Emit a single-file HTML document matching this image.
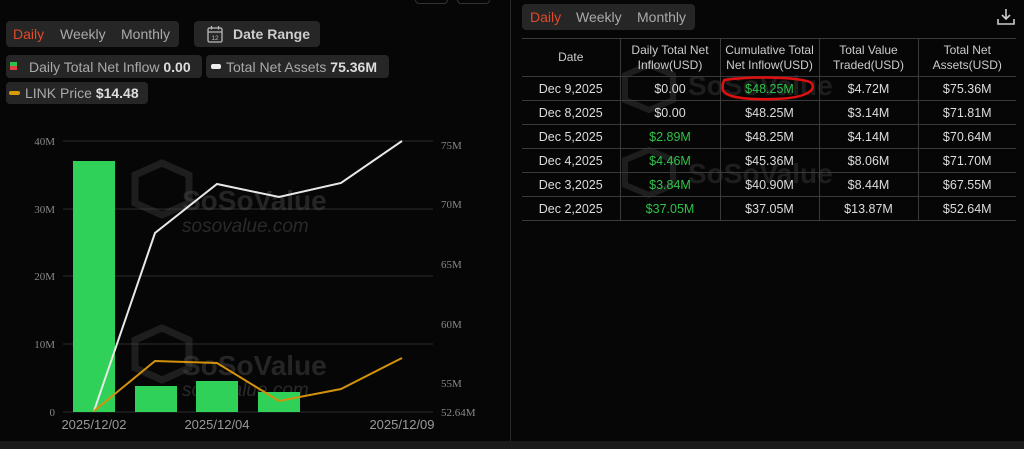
<!DOCTYPE html>
<html><head><meta charset="utf-8"><style>
*{margin:0;padding:0;box-sizing:border-box}
body{width:1024px;height:449px;background:#060606;font-family:"Liberation Sans",sans-serif;position:relative;overflow:hidden;color:#ccc}
.abs{position:absolute}
.box{position:absolute;background:#262626;border-radius:4px}
.t{position:absolute;font-size:14px;white-space:nowrap}
table{position:absolute;left:522px;top:38px;width:494px;border-collapse:collapse;font-size:12.5px;color:#ddd;table-layout:fixed}
td,th{border:1px solid #3a3a3a;text-align:center;font-weight:normal;height:24px}
th{height:38px;line-height:15px;color:#ccc;font-size:12px}
tr td:first-child,tr th:first-child{border-left:none}
tr td:last-child,tr th:last-child{border-right:none}
.g{color:#2fc24a}
</style></head><body>
<div class="abs" style="left:510px;top:0;width:1px;height:441px;background:#2a2a2a"></div>
<div class="abs" style="left:0;top:441px;width:1024px;height:8px;background:#1b1b1b"></div>
<div class="abs" style="left:415px;top:-6px;width:33px;height:10px;border:1px solid #333;border-radius:4px"></div>
<div class="abs" style="left:457px;top:-6px;width:33px;height:10px;border:1px solid #333;border-radius:4px"></div>

<div class="box" style="left:6px;top:21px;width:173px;height:26px"></div>
<div class="t" style="left:13px;top:26px;color:#e04a2a">Daily</div>
<div class="t" style="left:60px;top:26px;color:#aaa">Weekly</div>
<div class="t" style="left:121px;top:26px;color:#aaa">Monthly</div>
<div class="box" style="left:194px;top:21px;width:126px;height:26px"></div>
<svg class="abs" style="left:207px;top:25px" width="16" height="18" viewBox="0 0 16 18"><rect x="1" y="3" width="14" height="14" rx="1.5" fill="none" stroke="#bbb" stroke-width="1.3"/><line x1="1" y1="7" x2="15" y2="7" stroke="#bbb" stroke-width="1.2"/><line x1="4.5" y1="1" x2="4.5" y2="4.5" stroke="#bbb" stroke-width="1.3"/><line x1="11.5" y1="1" x2="11.5" y2="4.5" stroke="#bbb" stroke-width="1.3"/><text x="8" y="15" font-size="6.5" fill="#bbb" text-anchor="middle" font-family="Liberation Sans">12</text></svg>
<div class="t" style="left:233px;top:26px;color:#ccc;font-weight:bold">Date Range</div>

<div class="box" style="left:6px;top:55px;width:196px;height:23px"></div>
<div class="abs" style="left:10px;top:62px;width:7px;height:4px;background:#2fc24a"></div>
<div class="abs" style="left:10px;top:66px;width:7px;height:4px;background:#e04040"></div>
<div class="t" style="left:29px;top:59px;color:#aaa">Daily Total Net Inflow <b style="color:#ddd">0.00</b></div>
<div class="box" style="left:206px;top:55px;width:183px;height:23px"></div>
<div class="abs" style="left:211px;top:64px;width:10px;height:5px;background:#eee;border-radius:2px"></div>
<div class="t" style="left:226px;top:59px;color:#aaa">Total Net Assets <b style="color:#ddd">75.36M</b></div>
<div class="box" style="left:6px;top:82px;width:142px;height:22px"></div>
<div class="abs" style="left:9px;top:91px;width:11px;height:4px;background:#d99a0a;border-radius:2px"></div>
<div class="t" style="left:25px;top:85px;color:#aaa">LINK Price <b style="color:#ddd">$14.48</b></div>

<svg class="abs" style="left:0;top:120px" width="510" height="320" viewBox="0 120 510 320" font-family="Liberation Serif" font-size="11" fill="#888">
<g stroke="#2c2c2c" stroke-width="1">
<line x1="63" y1="141" x2="433" y2="141"/><line x1="63" y1="209" x2="433" y2="209"/><line x1="63" y1="276" x2="433" y2="276"/><line x1="63" y1="344" x2="433" y2="344"/><line x1="63" y1="412" x2="433" y2="412"/></g>
<text x="55" y="145" text-anchor="end">40M</text><text x="55" y="213" text-anchor="end">30M</text><text x="55" y="280" text-anchor="end">20M</text><text x="55" y="348" text-anchor="end">10M</text><text x="55" y="416" text-anchor="end">0</text>
<text x="441" y="149">75M</text><text x="441" y="208">70M</text><text x="441" y="268">65M</text><text x="441" y="328">60M</text><text x="441" y="387">55M</text><text x="441" y="416">52.64M</text>
<g fill="#555" font-family="Liberation Sans" font-size="28" font-weight="bold" opacity="0.4"><text x="182" y="210">SoSoValue</text><text x="182" y="375">SoSoValue</text></g>
<g fill="#555" font-family="Liberation Sans" font-size="19" font-style="italic" opacity="0.45"><text x="182" y="232">sosovalue.com</text><text x="182" y="396">sosovalue.com</text></g>
<g fill="none" stroke="#444" stroke-width="7" opacity="0.4"><path d="M135 175l27 -12l27 12v28l-27 12l-27 -12z"/><path d="M135 340l27 -12l27 12v28l-27 12l-27 -12z"/></g>
<g fill="#30d158"><rect x="73" y="161" width="42" height="251"/><rect x="135" y="386" width="42" height="26"/><rect x="196" y="381" width="42" height="31"/><rect x="258" y="392" width="42" height="20"/></g>
<polyline points="94,411 155,233 217,184 279,197 341,183 402,141" fill="none" stroke="#e8e8e8" stroke-width="2"/>
<polyline points="94,411 155,361 217,363 279,401 341,389 402,358" fill="none" stroke="#d4920c" stroke-width="2"/>
<g font-size="13" fill="#999" font-family="Liberation Sans"><text x="94" y="429" text-anchor="middle">2025/12/02</text><text x="217" y="429" text-anchor="middle">2025/12/04</text><text x="402" y="429" text-anchor="middle">2025/12/09</text></g>
</svg>

<div class="box" style="left:522px;top:4px;width:173px;height:26px"></div>
<div class="t" style="left:530px;top:9px;color:#e04a2a">Daily</div>
<div class="t" style="left:576px;top:9px;color:#aaa">Weekly</div>
<div class="t" style="left:637px;top:9px;color:#aaa">Monthly</div>
<svg class="abs" style="left:996px;top:8px" width="20" height="18" viewBox="0 0 20 18"><path d="M10 1v10M6 7l4 4l4-4M2 11v5h16v-5" fill="none" stroke="#ccc" stroke-width="1.6"/></svg>

<svg class="abs" style="left:620px;top:55px" width="320" height="150" font-family="Liberation Sans">
<g fill="#444" font-size="28" font-weight="bold" opacity="0.4"><text x="68" y="40">SoSoValue</text><text x="68" y="128">SoSoValue</text></g>
<g fill="none" stroke="#444" stroke-width="6" opacity="0.4"><path d="M5 20l24 -10l24 10v25l-24 10l-24 -10z"/><path d="M5 105l24 -10l24 10v25l-24 10l-24 -10z"/></g>
</svg>

<table>
<colgroup><col style="width:98px"><col style="width:100px"><col style="width:99px"><col style="width:99px"><col style="width:98px"></colgroup>
<tr><th>Date</th><th>Daily Total Net<br>Inflow(USD)</th><th>Cumulative Total<br>Net Inflow(USD)</th><th>Total Value<br>Traded(USD)</th><th>Total Net<br>Assets(USD)</th></tr>
<tr><td>Dec 9,2025</td><td>$0.00</td><td class="g">$48.25M</td><td>$4.72M</td><td>$75.36M</td></tr>
<tr><td>Dec 8,2025</td><td>$0.00</td><td>$48.25M</td><td>$3.14M</td><td>$71.81M</td></tr>
<tr><td>Dec 5,2025</td><td class="g">$2.89M</td><td>$48.25M</td><td>$4.14M</td><td>$70.64M</td></tr>
<tr><td>Dec 4,2025</td><td class="g">$4.46M</td><td>$45.36M</td><td>$8.06M</td><td>$71.70M</td></tr>
<tr><td>Dec 3,2025</td><td class="g">$3.84M</td><td>$40.90M</td><td>$8.44M</td><td>$67.55M</td></tr>
<tr><td>Dec 2,2025</td><td class="g">$37.05M</td><td>$37.05M</td><td>$13.87M</td><td>$52.64M</td></tr>
</table>
<svg class="abs" style="left:715px;top:74px" width="105" height="32"><path d="M9 6 C40 2 80 3 95 8 C103 14 95 24 60 25 C30 26 10 23 8 16 C7 11 8 8 10 5" fill="none" stroke="#e01010" stroke-width="2.5"/></svg>
</body></html>
